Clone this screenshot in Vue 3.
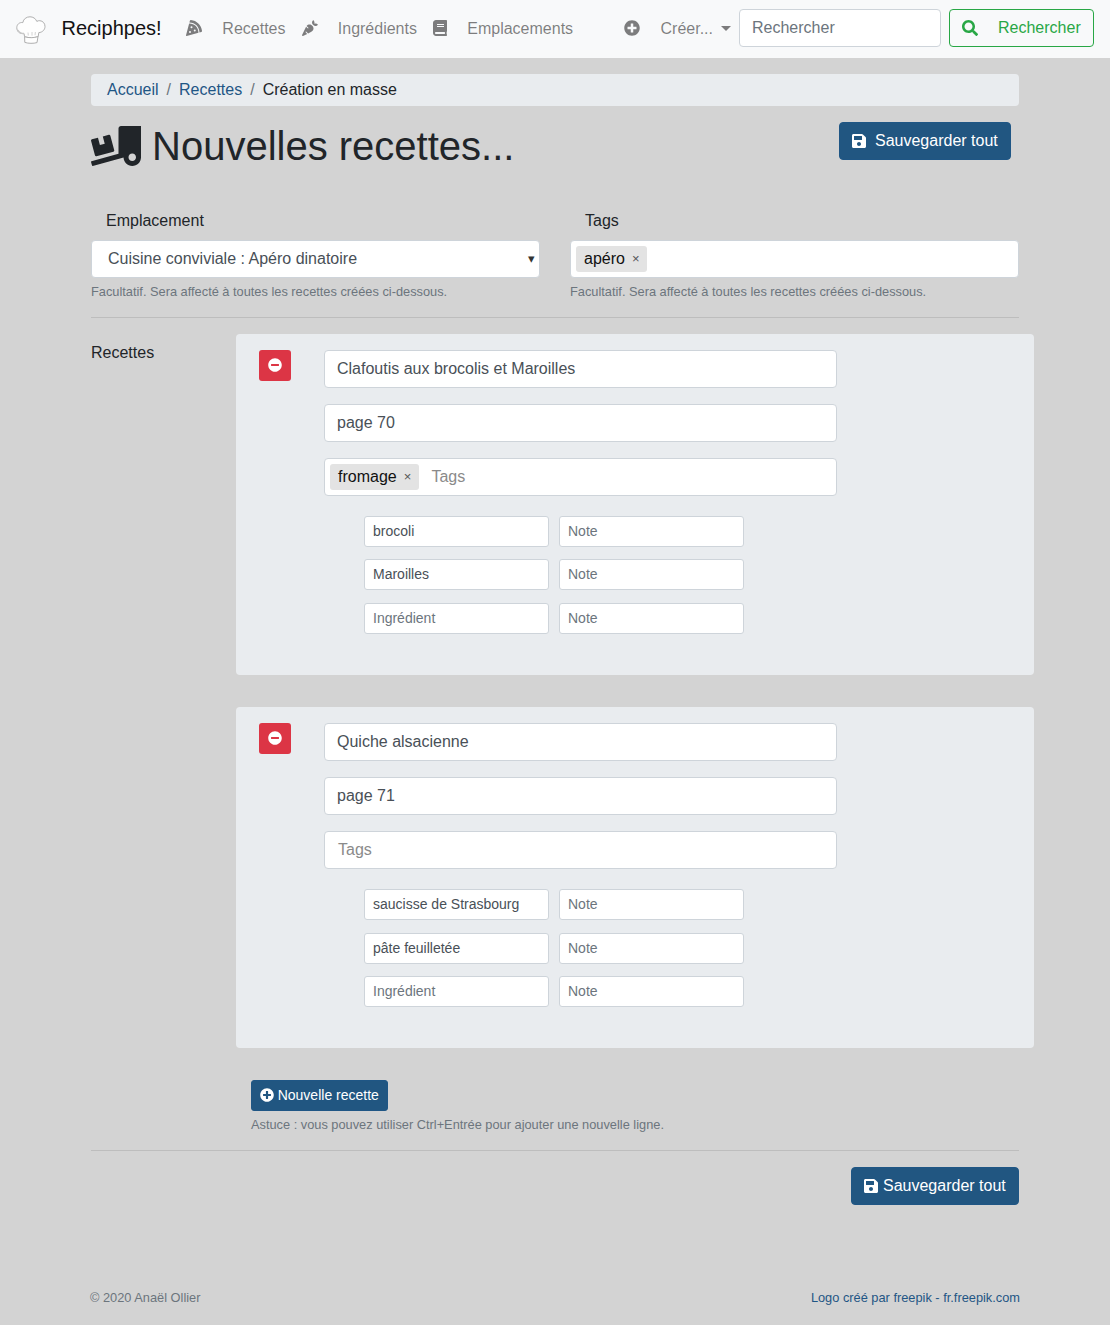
<script setup>
const icons = {
  pizza: { box: '0 0 512 512', d: 'M158.87.15c-16.16-1.52-31.2 8.42-35.33 24.12l-14.81 56.27c187.62 5.49 314.54 130.61 322.48 317l56.94-15.78c15.72-4.36 25.49-19.68 23.62-35.9C490.89 165.08 340.78 17.32 158.87.15zm-58.47 112L.55 491.64a16.21 16.21 0 0 0 20 19.75l379-105.1c-4.27-174.89-123.08-292.14-299.15-294.1zM128 416a32 32 0 1 1 32-32 32 32 0 0 1-32 32zm48-152a32 32 0 1 1 32-32 32 32 0 0 1-32 32zm104 104a32 32 0 1 1 32-32 32 32 0 0 1-32 32z' },
  carrot: { box: '0 0 512 512', d: 'M298.2 156.6c-52.7-25.7-114.5-10.5-150.2 32.8l55.2 55.2c6.3 6.3 6.3 16.4 0 22.6-3.1 3.1-7.2 4.7-11.3 4.7s-8.2-1.6-11.3-4.7L130.4 217 2.3 479.7c-2.9 6-3.1 13.3 0 19.7 5.4 11.1 18.9 15.7 30 10.3l133.6-65.2-49.2-49.2c-6.2-6.2-6.2-16.4 0-22.6 6.3-6.2 16.4-6.2 22.6 0l57 57 102-49.8c24-11.7 44.5-31.3 57.1-57.1 30.1-61.7 4.5-136.1-57.2-166.2zm92.1-34.9C409.8 81 399.7 32.9 360 0c-50.3 41.7-52.5 107.5-7.9 151.9l8 8c44.4 44.6 110.3 42.4 151.9-7.9-32.9-39.7-81-49.8-121.7-30.3z' },
  book: { box: '0 0 448 512', d: 'M448 360V24c0-13.3-10.7-24-24-24H96C43 0 0 43 0 96v320c0 53 43 96 96 96h328c13.3 0 24-10.7 24-24v-16c0-7.5-3.5-14.3-8.9-18.7-4.2-15.4-4.2-59.3 0-74.7 5.4-4.3 8.9-11.1 8.9-18.6zM128 134c0-3.3 2.7-6 6-6h212c3.3 0 6 2.7 6 6v20c0 3.3-2.7 6-6 6H134c-3.3 0-6-2.7-6-6v-20zm0 64c0-3.3 2.7-6 6-6h212c3.3 0 6 2.7 6 6v20c0 3.3-2.7 6-6 6H134c-3.3 0-6-2.7-6-6v-20zm253.4 250H96c-17.7 0-32-14.3-32-32 0-17.6 14.4-32 32-32h285.4c-1.9 17.1-1.9 46.9 0 64z' },
  plus: { box: '0 0 512 512', d: 'M256 8C119 8 8 119 8 256s111 248 248 248 248-111 248-248S393 8 256 8zm144 276c0 6.6-5.4 12-12 12h-92v92c0 6.6-5.4 12-12 12h-56c-6.6 0-12-5.4-12-12v-92h-92c-6.6 0-12-5.4-12-12v-56c0-6.6 5.4-12 12-12h92v-92c0-6.6 5.4-12 12-12h56c6.6 0 12 5.4 12 12v92h92c6.6 0 12 5.4 12 12v56z' },
  minus: { box: '0 0 512 512', d: 'M256 8C119 8 8 119 8 256s111 248 248 248 248-111 248-248S393 8 256 8zM124 296c-6.6 0-12-5.4-12-12v-56c0-6.6 5.4-12 12-12h264c6.6 0 12 5.4 12 12v56c0 6.6-5.4 12-12 12H124z' },
  search: { box: '0 0 512 512', d: 'M505 442.7L405.3 343c-4.5-4.5-10.6-7-17-7H372c27.6-35.3 44-79.7 44-128C416 93.1 322.9 0 208 0S0 93.1 0 208s93.1 208 208 208c48.3 0 92.7-16.4 128-44v16.3c0 6.4 2.5 12.5 7 17l99.7 99.7c9.4 9.4 24.6 9.4 33.9 0l28.3-28.3c9.4-9.4 9.4-24.6.1-34zM208 336c-70.7 0-128-57.2-128-128 0-70.7 57.2-128 128-128 70.7 0 128 57.2 128 128 0 70.7-57.2 128-128 128z' },
  save: { box: '0 0 448 512', d: 'M433.941 129.941l-83.882-83.882A48 48 0 0 0 316.118 32H48C21.49 32 0 53.49 0 80v352c0 26.51 21.49 48 48 48h352c26.51 0 48-21.49 48-48V163.882a48 48 0 0 0-14.059-33.941zM224 416c-35.346 0-64-28.654-64-64 0-35.346 28.654-64 64-64s64 28.654 64 64c0 35.346-28.654 64-64 64zm96-304.52V212c0 6.627-5.373 12-12 12H76c-6.627 0-12-5.373-12-12V108c0-6.627 5.373-12 12-12h228.52c3.183 0 6.235 1.264 8.485 3.515l3.48 3.48A11.996 11.996 0 0 1 320 111.48z' },
  truck: { box: '0 0 640 512', d: 'M50.2 375.6c2.3 8.5 11.1 13.6 19.6 11.3l216.4-58c8.5-2.3 13.6-11.1 11.3-19.6l-49.7-185.5c-2.3-8.5-11.1-13.6-19.6-11.3L151 133.3l24.8 92.7-61.8 16.5-24.8-92.7-77.3 20.7C3.4 172.8-1.7 181.6.6 190.1l49.6 185.5zM384 0c-17.7 0-32 14.3-32 32v323.6L5.9 450c-4.3 1.2-6.8 5.6-5.6 9.8l12.6 46.3c1.2 4.3 5.6 6.8 9.8 5.6l393.7-107.4C418.8 464.1 467.6 512 528 512c61.9 0 112-50.1 112-112V0H384zm144 448c-26.5 0-48-21.5-48-48s21.5-48 48-48 48 21.5 48 48-21.5 48-48 48z' }
}

const navLinks = [
  { icon: 'pizza', label: 'Recettes' },
  { icon: 'carrot', label: 'Ingrédients' },
  { icon: 'book', label: 'Emplacements' }
]

const recipes = [
  {
    title: 'Clafoutis aux brocolis et Maroilles',
    source: 'page 70',
    tags: ['fromage'],
    ingredients: ['brocoli', 'Maroilles', '']
  },
  {
    title: 'Quiche alsacienne',
    source: 'page 71',
    tags: [],
    ingredients: ['saucisse de Strasbourg', 'pâte feuilletée', '']
  }
]
</script>

<template>
  <div class="page">
    <nav class="navbar">
      <a class="brand">
        <svg class="hat" viewBox="0 0 30 28" width="30" height="28">
          <path d="M8 17.5C3.500 18 .8 15.400 .8 11.600 .8 8.400 3.600 6 6.800 6.600 7.400 3 10.400 .8 14 .8c3 0 5.600 1.600 6.800 4.600 1-.6 2-.8 3-.7 3 .2 5.200 2.600 5.200 5.700 0 3.400-2.600 6-6.200 6.200l-.6 4C18 22 13 22 8.600 20.800z" fill="#fff" stroke="#a9a9a9" stroke-width="1"/>
          <path d="M8.600 20.800l.2 5.600c3.800 1.200 8.600 1.200 12.200.2l1-6C18 22 13 22 8.600 20.800z" fill="#fff" stroke="#a9a9a9" stroke-width="1"/>
          <path d="M12 16.500l.3 3M16 16l0 3.600M19.400 16l-.4 3.200" fill="none" stroke="#c4c4c4" stroke-width=".8"/>
          <path d="M1.800 14C3 16.600 5.500 17.600 8 17.500" fill="none" stroke="#c4c4c4" stroke-width="1.500"/>
        </svg>
        <span class="brand-name">Reciphpes!</span>
      </a>
      <ul class="nav-list">
        <li v-for="link in navLinks" :key="link.label" class="nav-item">
          <svg class="nav-icon" :viewBox="icons[link.icon].box"><path :d="icons[link.icon].d" /></svg>
          <span>{{ link.label }}</span>
        </li>
      </ul>
      <div class="nav-right">
        <div class="nav-item">
          <svg class="nav-icon" :viewBox="icons.plus.box"><path :d="icons.plus.d" /></svg>
          <span>Créer...</span>
          <i class="caret"></i>
        </div>
        <input class="control search-input" placeholder="Rechercher" />
        <button class="btn-search">
          <svg class="search-icon" :viewBox="icons.search.box"><path :d="icons.search.d" /></svg>
          <span>Rechercher</span>
        </button>
      </div>
    </nav>

    <main class="container">
      <ol class="breadcrumb">
        <li><a>Accueil</a></li>
        <li class="sep">/</li>
        <li><a>Recettes</a></li>
        <li class="sep">/</li>
        <li>Création en masse</li>
      </ol>

      <header class="head">
        <h1>
          <svg class="title-icon" :viewBox="icons.truck.box"><path :d="icons.truck.d" /></svg>
          <span>Nouvelles recettes...</span>
        </h1>
        <button class="btn btn-save-top">
          <svg class="btn-icon" :viewBox="icons.save.box"><path :d="icons.save.d" /></svg>
          <span>Sauvegarder tout</span>
        </button>
      </header>

      <section class="common">
        <div class="field">
          <label>Emplacement</label>
          <div class="select-wrap">
            <select class="control select">
              <option>Cuisine conviviale : Apéro dinatoire</option>
            </select>
            <i class="select-caret">▾</i>
          </div>
          <small>Facultatif. Sera affecté à toutes les recettes créées ci-dessous.</small>
        </div>
        <div class="field">
          <label>Tags</label>
          <div class="control tags">
            <span class="chip">apéro<b>×</b></span>
          </div>
          <small>Facultatif. Sera affecté à toutes les recettes créées ci-dessous.</small>
        </div>
      </section>

      <hr />

      <section class="recipes">
        <div class="recipes-label">Recettes</div>
        <div class="recipes-list">
          <article v-for="recipe in recipes" :key="recipe.title" class="card">
            <button class="btn-remove" aria-label="Supprimer">
              <svg viewBox="0 0 512 512"><path :d="icons.minus.d" /></svg>
            </button>
            <div class="card-body">
              <input class="control" :value="recipe.title" />
              <input class="control" :value="recipe.source" />
              <div class="control tags">
                <span v-for="tag in recipe.tags" :key="tag" class="chip">{{ tag }}<b>×</b></span>
                <span class="tags-placeholder" :class="{ alone: !recipe.tags.length }">Tags</span>
              </div>
              <div class="ingredients">
                <div v-for="(name, i) in recipe.ingredients" :key="i" class="ingredient">
                  <input class="control small" :value="name" placeholder="Ingrédient" />
                  <input class="control small" placeholder="Note" />
                </div>
              </div>
            </div>
          </article>

          <button class="btn btn-new">
            <svg class="btn-icon" :viewBox="icons.plus.box"><path :d="icons.plus.d" /></svg>
            <span>Nouvelle recette</span>
          </button>
          <small class="tip">Astuce : vous pouvez utiliser Ctrl+Entrée pour ajouter une nouvelle ligne.</small>
        </div>
      </section>

      <hr class="hr-bottom" />

      <div class="save-row">
        <button class="btn btn-save">
          <svg class="btn-icon" :viewBox="icons.save.box"><path :d="icons.save.d" /></svg>
          <span>Sauvegarder tout</span>
        </button>
      </div>

      <footer class="footer">
        <span>© 2020 Anaël Ollier</span>
        <a>Logo créé par freepik - fr.freepik.com</a>
      </footer>
    </main>
  </div>
</template>

<style>
html, body {
  margin: 0;
  background: #d3d3d3;
}
</style>

<style scoped>
.page {
  height: 1325px;
  overflow: hidden;
  background: #d3d3d3;
  color: #212529;
  font-family: "Liberation Sans", Arial, sans-serif;
  font-size: 16px;
  line-height: 24px;
}

a {
  color: #1f5685;
}

.navbar {
  display: flex;
  align-items: center;
  height: 58px;
  box-sizing: border-box;
  padding: 0 16px;
  background: #f8f9fa;
}

.brand {
  display: flex;
  align-items: center;
  margin-right: 16.5px;
  color: #000;
  opacity: 0.92;
}

.hat {
  display: block;
  margin-right: 15.5px;
  margin-top: 1px;
}

.brand-name {
  margin-top: -2px;
  font-size: 20px;
  line-height: 30px;
}

.nav-list {
  display: flex;
  margin: 0;
  padding: 0;
  list-style: none;
}

.nav-item {
  display: flex;
  align-items: center;
  padding: 0 8px;
  color: rgba(0, 0, 0, 0.5);
}

.nav-icon {
  display: block;
  width: 16px;
  height: 16px;
  margin-top: -2px;
  margin-right: 20.3px;
  fill: rgba(0, 0, 0, 0.5);
}

.nav-item:nth-child(3) .nav-icon {
  width: 14px;
}

.nav-right {
  display: flex;
  align-items: center;
  margin-left: auto;
}

.nav-right .nav-icon {
  margin-right: 21px;
}

.caret {
  width: 0;
  height: 0;
  margin-top: -2px;
  margin-left: 8px;
  border-top: 5px solid rgba(0, 0, 0, 0.5);
  border-left: 5px solid transparent;
  border-right: 5px solid transparent;
}

.control {
  display: block;
  box-sizing: border-box;
  width: 100%;
  height: 38px;
  padding: 6px 12px;
  border: 1px solid #ced4da;
  border-radius: 4px;
  background: #fff;
  color: #495057;
  font: inherit;
  outline: none;
}

.control::placeholder {
  color: #6c757d;
  opacity: 1;
}

.search-input {
  width: 202px;
  margin-top: -2px;
}

.btn-search {
  display: flex;
  align-items: center;
  height: 38px;
  width: 145px;
  box-sizing: border-box;
  margin: -2px 0 0 8px;
  padding: 0 12px;
  border: 1px solid #28a745;
  border-radius: 4px;
  background: transparent;
  color: #28a745;
  font: inherit;
}

.search-icon {
  width: 16px;
  height: 16px;
  margin-right: 20px;
  fill: #28a745;
}

.container {
  width: 928px;
  margin: 0 auto;
  padding-top: 16px;
}

.breadcrumb {
  display: flex;
  height: 32px;
  box-sizing: border-box;
  margin: 0;
  padding: 4px 16px;
  border-radius: 4px;
  background: #e9ecef;
  list-style: none;
}

.sep {
  padding: 0 8px;
  color: #6c757d;
}

.head {
  display: flex;
  justify-content: space-between;
  align-items: flex-start;
  margin-top: 16px;
  padding-right: 8px;
}

h1 {
  display: flex;
  align-items: center;
  height: 48px;
  margin: 0;
  font-size: 40px;
  font-weight: 400;
  line-height: 48px;
}

.title-icon {
  width: 50px;
  height: 40px;
  margin-right: 11px;
  fill: #212529;
}

.btn {
  display: flex;
  align-items: center;
  box-sizing: border-box;
  border: 1px solid #1f5685;
  border-radius: 4px;
  background: #215681;
  color: #fff;
  font: inherit;
  white-space: nowrap;
}

.btn-save-top {
  width: 172px;
  height: 38px;
  padding: 0 12px;
}

.btn-save-top .btn-icon {
  margin-right: 9px;
}

.btn-icon {
  display: block;
  width: 14px;
  height: 16px;
  fill: #fff;
}

.common {
  display: grid;
  grid-template-columns: 449px 449px;
  column-gap: 30px;
  margin-top: 38px;
}

.field label {
  display: block;
  margin-bottom: 7px;
  padding: 1px 0 0 15px;
}

.field small {
  display: block;
  margin-top: 4px;
  color: #6c757d;
  font-size: 12.8px;
  line-height: 19px;
}

.select-wrap {
  position: relative;
}

.select {
  padding-left: 16px;
  appearance: none;
  -webkit-appearance: none;
}

.select-caret {
  position: absolute;
  top: 7px;
  right: 5px;
  font-style: normal;
  font-size: 13px;
  color: #333;
}

.tags {
  display: flex;
  align-items: center;
  padding: 0 5px;
}

.chip {
  display: flex;
  align-items: center;
  height: 26px;
  box-sizing: border-box;
  padding: 0 7.6px 0 8px;
  border-radius: 3px;
  background: #e3e3e3;
  color: #111;
}

.chip b {
  margin-left: 7px;
  font-size: 13px;
  font-weight: 400;
  color: #555;
}

.tags-placeholder {
  margin-left: 12.5px;
  color: #8a8a8a;
}

.tags-placeholder.alone {
  margin-left: 8px;
}

hr {
  margin: 16px 0;
  border: 0;
  border-top: 1px solid rgba(0, 0, 0, 0.1);
}

.recipes {
  display: grid;
  grid-template-columns: 145px 798px;
  margin-right: -15px;
}

.recipes-label {
  padding-top: 7px;
}

.card {
  display: flex;
  align-items: flex-start;
  box-sizing: border-box;
  height: 341px;
  margin-bottom: 32.25px;
  padding: 16px 0 0 23px;
  border-radius: 4px;
  background: #e9ecef;
}

.btn-remove {
  display: flex;
  align-items: center;
  justify-content: center;
  width: 32px;
  height: 31px;
  margin-right: 33px;
  padding: 0 0 2px;
  border: 0;
  border-radius: 3px;
  background: #dc3545;
}

.btn-remove svg {
  width: 14px;
  height: 14px;
  fill: #fff;
}

.card-body {
  display: flex;
  flex-direction: column;
  gap: 16px;
  width: 513px;
}

.ingredients {
  display: flex;
  flex-direction: column;
  gap: 12.5px;
  margin-top: 3.75px;
  padding-left: 40px;
}

.ingredient {
  display: flex;
  gap: 10px;
}

.control.small {
  width: 185px;
  height: 31px;
  padding: 3.5px 8px 4.5px;
  border-radius: 3px;
  font-size: 14px;
  line-height: 21px;
}

.btn-new {
  height: 31px;
  width: 137px;
  margin: -0.25px 0 0 15px;
  padding: 0 8px;
  border-radius: 3px;
  font-size: 14px;
  line-height: 21px;
}

.btn-new .btn-icon {
  height: 14px;
  margin-top: -1px;
  margin-right: 3.7px;
}

.tip {
  display: block;
  margin: 4px 0 0 15px;
  color: #6c757d;
  font-size: 12.8px;
  line-height: 19px;
}

.hr-bottom {
  margin-top: 16px;
}

.save-row {
  display: flex;
  justify-content: flex-end;
}

.btn-save {
  width: 168px;
  height: 38px;
  padding: 0 12px;
}

.btn-save .btn-icon {
  margin-right: 5px;
}

.footer {
  display: flex;
  justify-content: space-between;
  margin: 83px -1px 0;
  color: #6c757d;
  font-size: 12.8px;
  line-height: 20px;
}
</style>
